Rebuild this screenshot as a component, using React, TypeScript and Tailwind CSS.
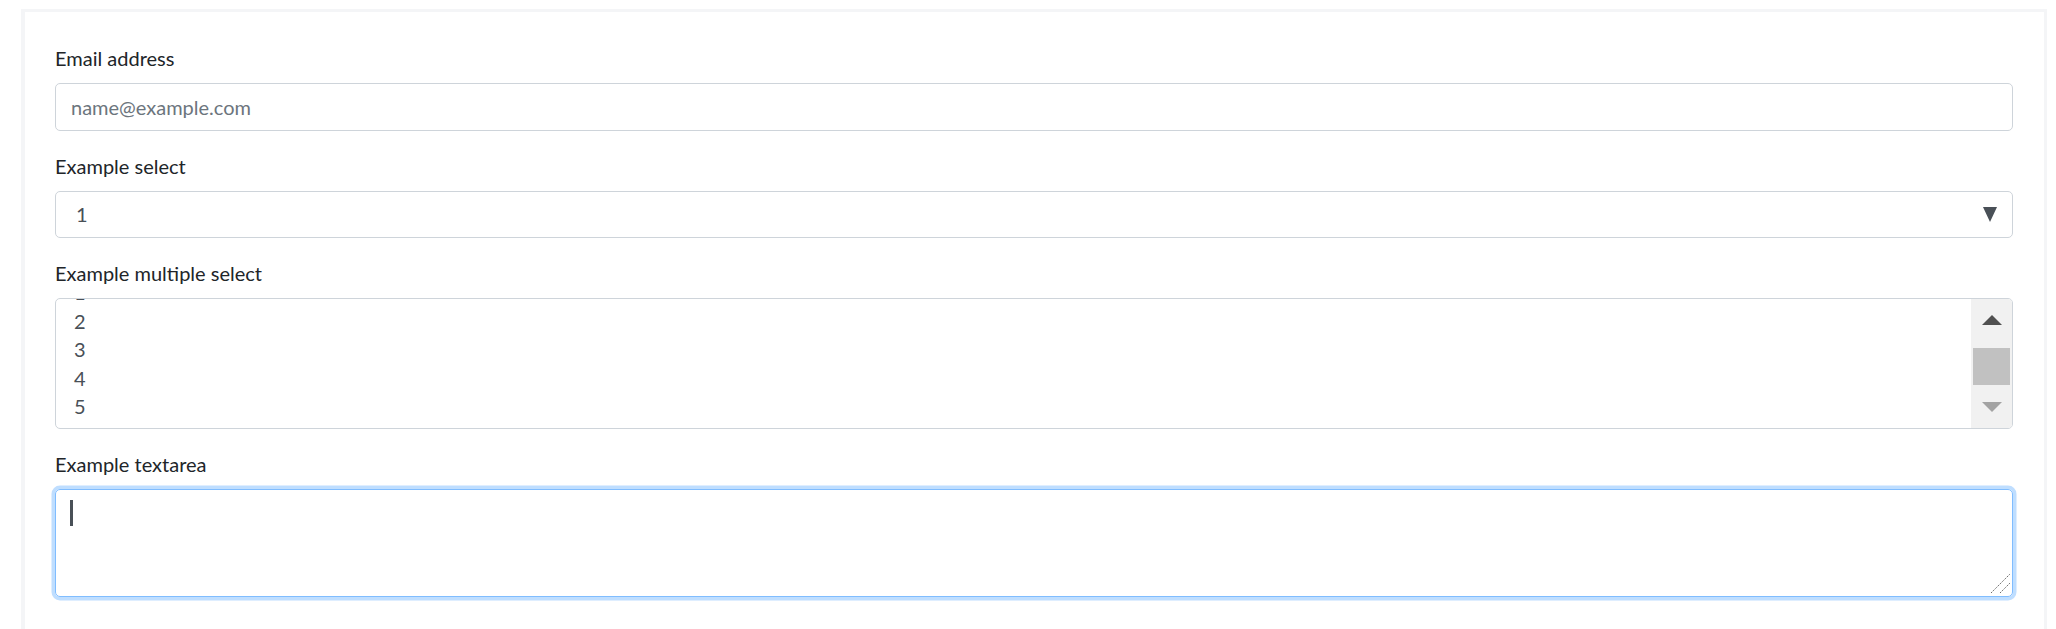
import { ReactNode } from 'react'

const font = { fontFamily: 'Lato, "Noto Sans", sans-serif' }

const Label = ({ children }: { children: ReactNode }) => (
    <label className="block text-[20px] leading-[30px] mb-[10px] text-[#212529]">{children}</label>
)

const ScrollArrow = ({ up, color }: { up?: boolean, color: string }) => (
    <div className="h-[42px] flex items-center justify-center">
        <svg width="20" height="10" viewBox="0 0 20 10">
            <polygon points={up ? '10,0 20,10 0,10' : '0,0 20,0 10,10'} fill={color} />
        </svg>
    </div>
)

export default function App() {
    const options = ['1', '2', '3', '4', '5']

    return (
        <div className="h-[629px] overflow-hidden bg-white pt-[9px] pl-[21px] pr-[9px]" style={font}>
            <div className="border-[3px] border-[#f4f5f7] border-l-[4px] p-[31px] pl-[30px] pb-[40px]">
                <div className="mb-[20px]">
                    <Label>Email address</Label>
                    <div className="h-[47.5px] border border-[#ced4da] rounded-[5px] px-[15px] flex items-center text-[20px] text-[#6c757d]">
                        name@example.com
                    </div>
                </div>

                <div className="mb-[20px]">
                    <Label>Example select</Label>
                    <div className="h-[47.5px] border border-[#ced4da] rounded-[5px] pl-[20px] pr-[15px] flex items-center text-[20px] text-[#495057]">
                        <span className="flex-1">1</span>
                        <svg width="14" height="15" viewBox="0 0 14 15">
                            <polygon points="0,0 14,0 7,15" fill="#495057" />
                        </svg>
                    </div>
                </div>

                <div className="mb-[20px]">
                    <Label>Example multiple select</Label>
                    <div className="h-[131px] border border-[#ced4da] rounded-[5px] flex overflow-hidden">
                        <div className="flex-1 overflow-hidden text-[20px] text-[#495057]">
                            <div className="-mt-[21px]">
                                {options.map(o => (
                                    <div key={o} className="h-[28.5px] leading-[28.5px] pl-[18px]">{o}</div>
                                ))}
                            </div>
                        </div>
                        <div className="w-[41px] bg-[#f1f1f1] flex flex-col">
                            <ScrollArrow up color="#505050" />
                            <div className="flex-1 px-[2px]">
                                <div className="mt-[7px] h-[37px] bg-[#c1c1c1]" />
                            </div>
                            <ScrollArrow color="#a3a3a3" />
                        </div>
                    </div>
                </div>

                <div className="mb-[20px]">
                    <Label>Example textarea</Label>
                    <div className="relative h-[108px] border border-[#80bdff] rounded-[5px] shadow-[0_0_0_3.5px_rgba(0,123,255,0.25)] px-[14px] py-[7.5px]">
                        <div className="h-[30px] flex items-center">
                            <span className="w-[3px] h-[26px] bg-[#495057]" />
                        </div>
                        <svg className="absolute right-[1px] bottom-[2px]" width="21" height="21" viewBox="0 0 21 21">
                            <line x1="1" y1="20" x2="20" y2="1" stroke="#6b6b6b" strokeWidth="1" strokeDasharray="1.5 1" />
                            <line x1="10" y1="20" x2="20" y2="10" stroke="#6b6b6b" strokeWidth="1" strokeDasharray="1.5 1" />
                        </svg>
                    </div>
                </div>
            </div>
        </div>
    )
}
